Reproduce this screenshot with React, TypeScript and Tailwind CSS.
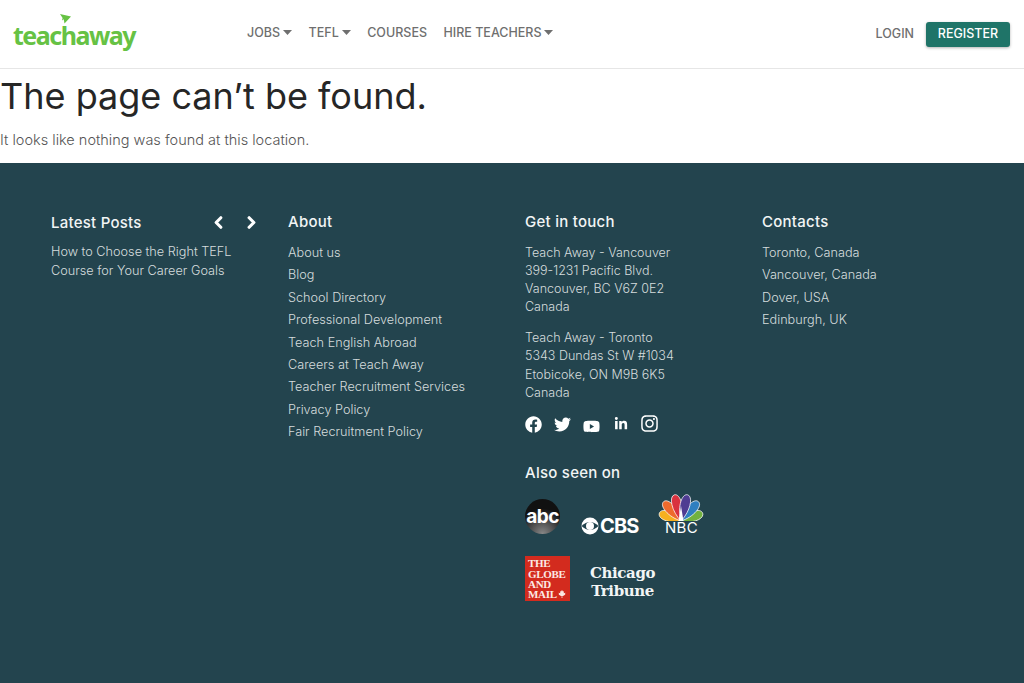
import React from "react";
import { ChevronLeft, ChevronRight } from "lucide-react";
import { FaFacebook, FaTwitter, FaYoutube, FaLinkedinIn, FaInstagram } from "react-icons/fa";

const font = "font-['Inter','Liberation_Sans',sans-serif]";

const Caret = () => (
  <svg width="9" height="5" viewBox="0 0 9 5" className="ml-[3px] mt-[-1px]">
    <path d="M0 0h9L4.5 5z" fill="#6f6f6f" />
  </svg>
);

const NavItem = ({ label, caret }: { label: string; caret?: boolean }) => (
  <a className="flex items-center text-[12.5px] font-medium text-[#6f6f6f]">
    {label}
    {caret && <Caret />}
  </a>
);

const Heading = ({ children }: { children: React.ReactNode }) => (
  <h3 className="text-[15px] font-medium leading-[18px] tracking-[0.25px] text-[#f2f5f5]">{children}</h3>
);

const aboutLinks = [
  "About us",
  "Blog",
  "School Directory",
  "Professional Development",
  "Teach English Abroad",
  "Careers at Teach Away",
  "Teacher Recruitment Services",
  "Privacy Policy",
  "Fair Recruitment Policy",
];

const contacts = ["Toronto, Canada", "Vancouver, Canada", "Dover, USA", "Edinburgh, UK"];

const LinkList = ({ items }: { items: string[] }) => (
  <ul className="mt-[11px] flex flex-col">
    {items.map((item) => (
      <li key={item} className="h-[22.4px] text-[12.7px] font-light leading-[22.4px] text-[#d5dcdd]">
        {item}
      </li>
    ))}
  </ul>
);

const Address = ({ lines }: { lines: string[] }) => (
  <p className="text-[12.5px] font-light leading-[18.3px] text-[#d5dcdd]">
    {lines.map((l) => (
      <span key={l} className="block">
        {l}
      </span>
    ))}
  </p>
);

// feather drawn pointing up from the base of the fan, then rotated
const Peacock = () => {
  const feathers = [
    { c: "#f6b01e", r: -70, l: 23 },
    { c: "#72b23f", r: 70, l: 23 },
    { c: "#ee6a2c", r: -42, l: 26 },
    { c: "#2f7fc0", r: 42, l: 26 },
    { c: "#d9323f", r: -14, l: 27 },
    { c: "#4f3c92", r: 14, l: 27 },
  ];
  return (
    <svg width="46" height="27" viewBox="0 0 46 27">
      {feathers.map((f) => (
        <path
          key={f.r}
          d={`M23 27C16 ${27 - f.l * 0.45} 17 ${27 - f.l} 23 ${27 - f.l}C29 ${27 - f.l} 30 ${27 - f.l * 0.45} 23 27Z`}
          fill={f.c}
          stroke="#fff"
          strokeWidth="0.7"
          transform={`rotate(${f.r} 23 27)`}
        />
      ))}
      <path d="M20.5 27 23 12l2.5 15z" fill="#fff" />
    </svg>
  );
};

export default function App() {
  return (
    <div className={`${font} flex min-h-[683px] flex-col bg-white`}>
      <header className="flex h-[69px] items-center border-b border-[#e6e6e6] pl-[13px] pr-[14px]">
        <a className="mt-[2px] flex w-[234px] flex-col">
          <span className="relative font-['Noto_Sans',sans-serif] text-[25px] font-bold leading-[26px] tracking-[-1.5px] text-[#66c244]">
            teachaway
            <svg width="11" height="10" viewBox="0 0 11 10" className="absolute left-[47px] top-[-8px]">
              <path d="M0 0l11 2.500-6.500 7-.8-4.200-1.700 1.200.6-2.400z" fill="#66c244" />
            </svg>
          </span>
        </a>
        <nav className="mt-[-2px] flex items-center gap-[16.5px]">
          <NavItem label="JOBS" caret />
          <NavItem label="TEFL" caret />
          <NavItem label="COURSES" />
          <NavItem label="HIRE TEACHERS" caret />
        </nav>
        <div className="ml-auto flex items-center gap-[12px]">
          <a className="mt-[1px] text-[12.5px] font-medium text-[#6f6f6f]">LOGIN</a>
          <a className="flex h-[25px] w-[84px] items-center justify-center rounded-[3px] bg-[#1f7468] pt-[1px] text-[12.5px] font-medium text-white shadow-[0_1px_3px_rgba(0,0,0,0.3)]">
            REGISTER
          </a>
        </div>
      </header>

      <main className="h-[94px] pt-[4px]">
        <h1 className="text-[36px] font-normal leading-[46px] text-[#262626]">The page can’t be found.</h1>
        <p className="mt-[11px] text-[14.5px] font-light leading-[20px] text-[#555]">
          It looks like nothing was found at this location.
        </p>
      </main>

      <footer className="grid flex-1 grid-cols-[237px_237px_237px_237px] bg-[#23444e] pl-[51px] pt-[50px]">
        <section>
          <div className="flex items-center justify-between pr-[27px]">
            <Heading>Latest Posts</Heading>
            <div className="flex gap-[14px] text-white">
              <ChevronLeft size={19} strokeWidth={4} />
              <ChevronRight size={19} strokeWidth={4} />
            </div>
          </div>
          <p className="mt-[10px] text-[12.7px] font-light leading-[19px] text-[#d5dcdd]">
            How to Choose the Right TEFL
            <br />
            Course for Your Career Goals
          </p>
        </section>

        <section>
          <Heading>About</Heading>
          <LinkList items={aboutLinks} />
        </section>

        <section>
          <Heading>Get in touch</Heading>
          <div className="mt-[12.5px] flex flex-col gap-[12.5px]">
            <Address lines={["Teach Away - Vancouver", "399-1231 Pacific Blvd.", "Vancouver, BC V6Z 0E2", "Canada"]} />
            <Address lines={["Teach Away - Toronto", "5343 Dundas St W #1034", "Etobicoke, ON M9B 6K5", "Canada"]} />
          </div>
          <div className="mt-[12px] flex h-[20px] items-start text-white">
            <FaFacebook size={17} className="mt-[2px]" />
            <FaTwitter size={17} className="ml-[12px] mt-[2px]" />
            <FaYoutube size={17} className="ml-[12px] mt-[4px]" />
            <FaLinkedinIn size={14} className="ml-[14px] mt-[3px]" />
            <FaInstagram size={19} className="ml-[12px]" />
          </div>
          <div className="mt-[30px]">
            <Heading>Also seen on</Heading>
          </div>
          <div className="mt-[17px] flex w-[180px] items-start">
            <div className="flex h-[35px] w-[35px] items-center justify-center rounded-full bg-[radial-gradient(circle_at_50%_100%,#888,#111_65%)] text-[19px] font-bold leading-none tracking-[-0.5px] text-white">
              abc
            </div>
            <div className="ml-[21px] mt-[17px] flex items-center gap-[1px]">
              <svg width="18" height="18" viewBox="0 0 18 18">
                <circle cx="9" cy="9" r="8.5" fill="#fff" />
                <path d="M0.5 9q8.5-8 17 0q-8.5 8-17 0z" fill="#23444e" />
                <circle cx="9" cy="9" r="4" fill="#fff" />
              </svg>
              <span className="text-[20px] font-bold leading-none tracking-[-0.9px] text-white">CBS</span>
            </div>
            <div className="ml-[20px] mt-[-5px] flex w-[46px] flex-col items-center">
              <Peacock />
              <span className="mt-[1px] text-[15px] leading-[12px] tracking-[0.3px] text-white">NBC</span>
            </div>
          </div>
          <div className="mt-[20px] flex items-center">
            <div className="flex h-[45px] w-[45px] flex-col justify-center bg-[#d32b1e] pl-[3px] font-['Liberation_Serif',serif] text-[11px] font-bold leading-[10.3px] tracking-[-0.3px] text-[#fbe9e4]">
              <span>THE</span>
              <span>GLOBE</span>
              <span>AND</span>
              <span className="flex items-center">
                MAIL
                <svg width="8" height="8" viewBox="0 0 8 8" className="ml-[1px]">
                  <path d="M4 0l1 1.600 1-.4-.3 2 1.800-.4-.6 1.400.6.4L5 6H4.300L4.400 8h-.8l.1-2H3L.5 4.600l.6-.4L.5 2.800l1.800.4L2 1.200l1 .4z" fill="#fbe9e4" />
                </svg>
              </span>
            </div>
            <div className="ml-[20px] mt-[7px] flex flex-col items-center font-['DejaVu_Serif',serif] text-[15px] font-bold leading-[18px] tracking-[-0.4px] text-[#f2f5f5]">
              <span>Chicago</span>
              <span>Tribune</span>
            </div>
          </div>
        </section>

        <section>
          <Heading>Contacts</Heading>
          <LinkList items={contacts} />
        </section>
      </footer>
    </div>
  );
}
